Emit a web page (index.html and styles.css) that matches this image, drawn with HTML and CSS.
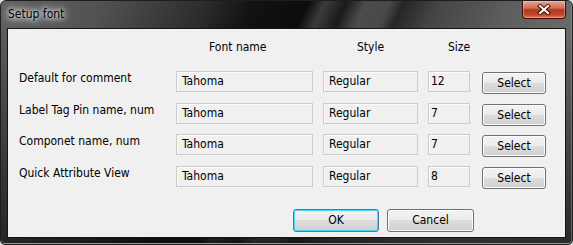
FILE: index.html
```html
<!DOCTYPE html>
<html lang="en">
  <head>
    <meta charset="UTF-8" />
    <title>Setup font</title>
    <link rel="stylesheet" href="styles.css">
  </head>
  <body>
    <div class="window">
      <div class="titlebar">
        <span class="title">Setup font</span>
        <button class="close-button">
          <svg width="14" height="11" viewBox="0 0 14 11">
            <path d="M3 2 L11 9 M11 2 L3 9" stroke="#3b1208" stroke-width="4" stroke-linecap="square" fill="none" />
            <path d="M3 2 L11 9 M11 2 L3 9" stroke="#ffffff" stroke-width="2" stroke-linecap="square" fill="none" />
          </svg>
        </button>
      </div>
      <div class="client">
        <div class="columns header">
          <div></div>
          <div class="head-font">Font name</div>
          <div class="head-style">Style</div>
          <div class="head-size">Size</div>
          <div></div>
        </div>
        <div class="columns rows">
          <div class="label">Default for comment</div>
          <div class="field">Tahoma</div>
          <div class="field">Regular</div>
          <div class="field size-field">12</div>
          <button class="btn select-button">Select</button>

          <div class="label">Label Tag Pin name, num</div>
          <div class="field">Tahoma</div>
          <div class="field">Regular</div>
          <div class="field size-field">7</div>
          <button class="btn select-button">Select</button>

          <div class="label">Componet name, num</div>
          <div class="field">Tahoma</div>
          <div class="field">Regular</div>
          <div class="field size-field">7</div>
          <button class="btn select-button">Select</button>

          <div class="label">Quick Attribute View</div>
          <div class="field">Tahoma</div>
          <div class="field">Regular</div>
          <div class="field size-field">8</div>
          <button class="btn select-button">Select</button>
        </div>
        <div class="footer">
          <button class="btn btn-default ok-button">OK</button>
          <button class="btn cancel-button">Cancel</button>
        </div>
      </div>
    </div>
  </body>
</html>
```

FILE: styles.css
```css
body {
    margin: 0;
    background-color: #dcdcdc;
    font-family: "DejaVu Sans Condensed", "Liberation Sans", sans-serif;
    font-size: 12px;
    color: #000;
}

.window {
    width: 573px;
    height: 245px;
    box-sizing: border-box;
    padding: 0 6px 6px 6px;
    display: flex;
    flex-direction: column;
    border: 1px solid #1e1e1e;
    border-radius: 6px 6px 5px 5px;
    box-shadow: inset 0 -1px 0 #3eb6d8, inset -1px 0 0 rgba(62, 182, 216, 0.5);
    background:
        linear-gradient(to bottom, rgba(0, 0, 0, 0) 0, rgba(0, 0, 0, 0) 28px, rgba(15, 15, 15, 0.65) 100%),
        linear-gradient(115deg, #606060 0%, #525252 15%, #2c2c2c 30%, #121212 37%, #0c0c0c 45%,
            #3c3c3c 47.5%, #1a1a1a 50.5%, #4c4c4c 53.5%, #484848 57%, #262626 59%,
            #454545 64%, #5e5e5e 75%, #6a6a6a 85%, #5a5a5a 100%);
}

.titlebar {
    height: 27px;
    display: flex;
    justify-content: space-between;
    align-items: flex-start;
}

.title {
    margin: 5px 0 0 1px;
    line-height: 16px;
    font-size: 12px;
    text-shadow: 0 0 4px #fff, 0 0 8px #fff, 0 0 12px rgba(255, 255, 255, 0.8);
}

.close-button {
    width: 44px;
    height: 18px;
    padding: 0;
    display: flex;
    align-items: center;
    justify-content: center;
    border: 1px solid #3a0d06;
    border-top: none;
    border-radius: 0 0 4px 4px;
    background: linear-gradient(#e3a590 0%, #d27058 40%, #b8361a 52%, #c2462a 80%, #df7a52 100%);
    box-shadow: inset 0 0 0 1px rgba(255, 255, 255, 0.3);
}

.client {
    flex: 1;
    border: 1px solid #151515;
    background-color: #f0f0f0;
}

.columns {
    display: grid;
    grid-template-columns: 147px 137px 95px 42px 66px;
    column-gap: 10px;
    padding-left: 11px;
}

.header {
    padding-top: 11px;
    line-height: 14px;
}

.head-font {
    padding-left: 33px;
}

.head-style {
    padding-left: 34px;
}

.head-size {
    padding-left: 20px;
}

.rows {
    margin-top: 17px;
    grid-auto-rows: 21px;
    row-gap: 10.67px;
}

.label {
    line-height: 14px;
    white-space: nowrap;
}

.field {
    border: 1px solid #cbcbcb;
    background-color: #f0f0f0;
    box-shadow: inset 1px 1px 0 #fbfbfb;
    padding: 0 5px;
    line-height: 19px;
}

.size-field {
    padding-left: 2px;
}

.btn {
    font-family: inherit;
    font-size: 12px;
    color: #000;
    padding: 0;
    border: 1px solid #707070;
    border-radius: 3px;
    background: linear-gradient(#f2f2f2 0%, #ebebeb 50%, #dddddd 50%, #cfcfcf 100%);
    box-shadow: inset 0 0 0 1px #fcfcfc;
}

.select-button {
    height: 22px;
    margin: 1px 0 0 2px;
}

.footer {
    display: flex;
    gap: 8px;
    margin-top: 22px;
    padding-left: 285px;
}

.ok-button {
    width: 86px;
    height: 23px;
}

.cancel-button {
    width: 87px;
    height: 23px;
}

.btn-default {
    border-color: #3c7fb1;
    box-shadow: inset 0 0 0 1px #48d4f8;
}
```
